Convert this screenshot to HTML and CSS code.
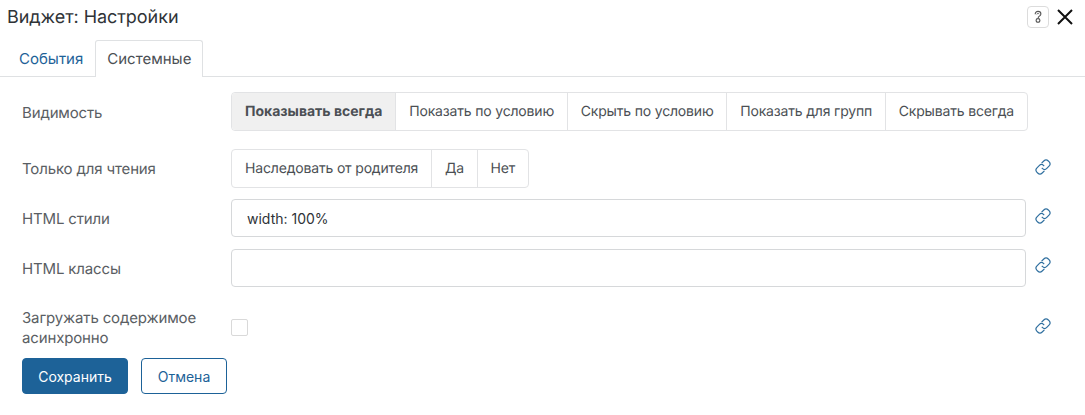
FILE: index.html
```html
<!DOCTYPE html>
<html lang="ru">
<head>
<meta charset="utf-8">
<title>Виджет: Настройки</title>
<link rel="stylesheet" href="styles.css">
</head>
<body>
<div class="dialog">
  <header class="head">
    <h1 class="title">Виджет: Настройки</h1>
    <div class="head-actions">
      <button class="help" type="button"><svg width="10" height="14" viewBox="0 0 10 14"><path d="M2.200 4.200C2.200 2.400 3.400 1.400 5 1.400s2.900 1 2.900 2.500c0 1.300-.9 1.900-1.800 2.500-.6.4-.9.8-.9 1.500M5 8.600c1.200 0 1.900.7 1.900 1.700S6.200 12.300 5 12.300s-1.900-.9-1.900-2 .7-1.700 1.900-1.700Z" fill="none" stroke="#555" stroke-width="1.100"/><path d="M3.900 4.500c0-.8.500-1.200 1.100-1.200s1.100.4 1.100 1" fill="none" stroke="#555" stroke-width=".8"/></svg></button>
      <button class="close" type="button"><svg width="16" height="16" viewBox="0 0 16 16"><path d="M1 1l14 14M15 1L1 15" stroke="#111" stroke-width="2" fill="none"/></svg></button>
    </div>
  </header>
  <nav class="tabs">
    <a class="tab">События</a>
    <a class="tab active">Системные</a>
  </nav>
  <form class="form">
    <div class="row row-vis">
      <label class="label label-vis">Видимость</label>
      <div class="seg">
        <span class="seg-item on">Показывать всегда</span>
        <span class="seg-item">Показать по условию</span>
        <span class="seg-item">Скрыть по условию</span>
        <span class="seg-item">Показать для групп</span>
        <span class="seg-item">Скрывать всегда</span>
      </div>
    </div>
    <div class="row row-read">
      <label class="label">Только для чтения</label>
      <div class="seg">
        <span class="seg-item">Наследовать от родителя</span>
        <span class="seg-item">Да</span>
        <span class="seg-item">Нет</span>
      </div>
      <svg class="link" width="18" height="18" viewBox="0 0 18 18"><g fill="none" stroke="#2f6f9f" stroke-width="1.200"><path d="M7.600 5.200l2.200-2.200a3.200 3.200 0 0 1 4.500 0l.7.700a3.200 3.200 0 0 1 0 4.500l-2.200 2.200a3.200 3.200 0 0 1-4.500 0l-.5-.5"/><path d="M10.400 12.800l-2.200 2.200a3.200 3.200 0 0 1-4.500 0l-.7-.7a3.200 3.200 0 0 1 0-4.500l2.200-2.200a3.200 3.200 0 0 1 4.500 0l.5.5"/></g></svg>
    </div>
    <div class="row row-input">
      <label class="label label-input">HTML стили</label>
      <input class="input" type="text" value="width: 100%">
      <svg class="link" width="18" height="18" viewBox="0 0 18 18"><g fill="none" stroke="#2f6f9f" stroke-width="1.200"><path d="M7.600 5.200l2.200-2.200a3.200 3.200 0 0 1 4.500 0l.7.700a3.200 3.200 0 0 1 0 4.500l-2.200 2.200a3.200 3.200 0 0 1-4.500 0l-.5-.5"/><path d="M10.400 12.800l-2.200 2.200a3.200 3.200 0 0 1-4.500 0l-.7-.7a3.200 3.200 0 0 1 0-4.500l2.200-2.200a3.200 3.200 0 0 1 4.500 0l.5.5"/></g></svg>
    </div>
    <div class="row row-input">
      <label class="label label-input">HTML классы</label>
      <input class="input" type="text" value="">
      <svg class="link" width="18" height="18" viewBox="0 0 18 18"><g fill="none" stroke="#2f6f9f" stroke-width="1.200"><path d="M7.600 5.200l2.200-2.200a3.200 3.200 0 0 1 4.500 0l.7.700a3.200 3.200 0 0 1 0 4.500l-2.200 2.200a3.200 3.200 0 0 1-4.500 0l-.5-.5"/><path d="M10.400 12.800l-2.200 2.200a3.200 3.200 0 0 1-4.500 0l-.7-.7a3.200 3.200 0 0 1 0-4.500l2.200-2.200a3.200 3.200 0 0 1 4.500 0l.5.5"/></g></svg>
    </div>
    <div class="row row-check">
      <label class="label">Загружать содержимое асинхронно</label>
      <span class="check"></span>
      <svg class="link" width="18" height="18" viewBox="0 0 18 18"><g fill="none" stroke="#2f6f9f" stroke-width="1.200"><path d="M7.600 5.200l2.200-2.200a3.200 3.200 0 0 1 4.500 0l.7.700a3.200 3.200 0 0 1 0 4.500l-2.200 2.200a3.200 3.200 0 0 1-4.500 0l-.5-.5"/><path d="M10.400 12.800l-2.200 2.200a3.200 3.200 0 0 1-4.500 0l-.7-.7a3.200 3.200 0 0 1 0-4.500l2.200-2.200a3.200 3.200 0 0 1 4.500 0l.5.5"/></g></svg>
    </div>
    <div class="actions">
      <button class="btn primary" type="button">Сохранить</button>
      <button class="btn ghost" type="button">Отмена</button>
    </div>
  </form>
</div>
</body>
</html>
```
FILE: styles.css
```css
* { box-sizing: border-box; }
html, body { margin: 0; padding: 0; height: 100%; background: #fff; overflow: hidden; }
body { font-family: Inter, "Liberation Sans", sans-serif; font-size: 14px; color: #4b4f54; text-rendering: geometricPrecision; }
.dialog { width: 1085px; height: 415px; }
.head { display: flex; justify-content: space-between; align-items: center; height: 34px; padding: 0 11px 0 7px; }
.title { margin: 0; padding-top: 2px; font-size: 18px; font-weight: 400; letter-spacing: -0.05px; color: #2f3337; line-height: 34px; }
.head-actions { display: flex; align-items: center; gap: 7px; }
.help { width: 22px; height: 22px; padding: 0; display: flex; align-items: center; justify-content: center; background: #fff; border: 1px solid #dcdcdc; border-radius: 4px; }
.close { width: 18px; height: 18px; padding: 0; display: flex; align-items: center; justify-content: center; background: none; border: 0; }
.tabs { display: flex; height: 43px; padding: 6px 0 0 7px; border-bottom: 1px solid #dfe1e3; }
.tab { height: 37px; padding: 0 11px; line-height: 35px; font-size: 15px; color: #1d6298; border: 1px solid transparent; border-bottom: 0; border-radius: 3px 3px 0 0; }
.tab.active { color: #4b4f54; background: #fff; border-color: #dfe1e3; }
.form { padding: 15px 0 0 22px; }
.row { display: flex; align-items: center; position: relative; }
.label { width: 209px; flex: none; font-size: 15px; letter-spacing: -0.15px; color: #5a5e63; line-height: 20px; }
.label-vis { padding-top: 3px; }
.label-input { padding-top: 2px; }
.row-vis { height: 39px; margin-bottom: 18px; }
.row-read { height: 39px; margin-bottom: 11px; }
.row-input { height: 38px; margin-bottom: 12px; }
.row-check { height: 50px; margin: 16px 0 5px; }
.row-check .label { padding-right: 20px; }
.seg { display: flex; height: 39px; border: 1px solid #e2e3e5; border-radius: 4px; background: #fff; }
.seg-item { padding: 0 12.800px; line-height: 37px; letter-spacing: -0.17px; border-left: 1px solid #e2e3e5; white-space: nowrap; }
.seg-item:first-child { border-left: 0; padding: 0 13px; }
.seg-item.on { background: #f0f0f0; font-weight: 700; letter-spacing: 0; border-radius: 4px 0 0 4px; }
.input { width: 795px; height: 38px; padding: 0 15px; border: 1px solid #d6d8da; border-radius: 4px; font: inherit; color: #2f3337; outline: none; }
.check { width: 17px; height: 17px; margin-top: -2px; border: 1px solid #d9d9d9; border-radius: 2px; background: #fff; }
.link { position: absolute; left: 1012px; top: 50%; margin-top: -11px; }
.row-input + .row-input .link { margin-top: -12px; }
.actions { display: flex; gap: 13px; }
.btn { height: 36px; font: inherit; border-radius: 4px; padding: 0; }
.primary { width: 106px; background: #1d6298; border: 1px solid #1d6298; color: #fff; }
.ghost { width: 86px; background: #fff; border: 1px solid #1d6298; color: #1d6298; }
```
